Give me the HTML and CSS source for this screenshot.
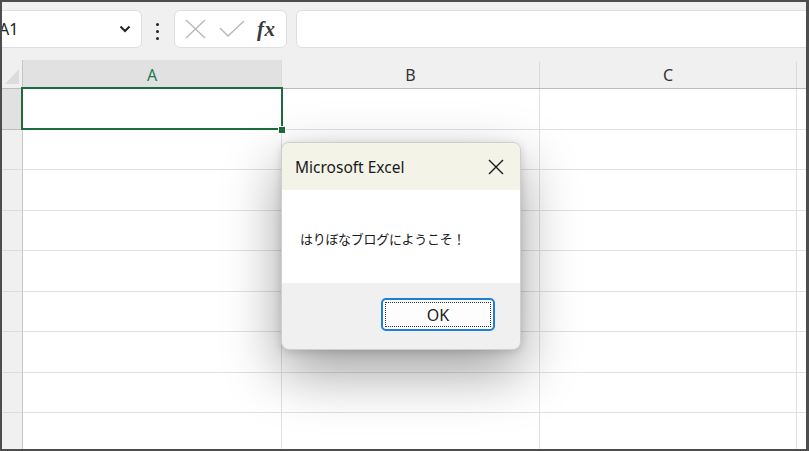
FILE: index.html
```html
<!DOCTYPE html>
<html lang="ja">
<head>
<meta charset="UTF-8" />
<title>Microsoft Excel</title>
<link rel="stylesheet" href="styles.css">
</head>
<body>
<div class="frame">

  <!-- Name box & formula bar -->
  <div class="toolbar">
    <div class="namebox">
      <span class="ref">A1</span>
      <svg class="chev" width="12" height="8" viewBox="0 0 12 8"><polyline points="1.5,1.5 6,6 10.5,1.5" fill="none" stroke="#222" stroke-width="2"/></svg>
    </div>
    <div class="dots"><i></i><i></i><i></i></div>
    <div class="fbtns">
      <svg width="21" height="20" viewBox="0 0 21 20"><path d="M1 1 L20 19 M20 1 L1 19" stroke="#b8b8b8" stroke-width="1.4" fill="none"/></svg>
      <svg width="26" height="18" viewBox="0 0 26 18"><polyline points="1,8 9,16 25,1" fill="none" stroke="#b8b8b8" stroke-width="1.4"/></svg>
      <span class="fx">fx</span>
    </div>
    <div class="finput"></div>
  </div>

  <!-- Sheet -->
  <div class="sheet">
    <div class="hrow">
      <div class="corner"><span class="tri"></span></div>
      <div class="colh sel">A</div>
      <div class="colh">B</div>
      <div class="colh">C</div>
      <div class="colh rest"></div>
    </div>
    <div class="row first">
      <div class="rowh sel"></div>
      <div class="cell active"><span class="selbox"></span><span class="handle"></span></div>
      <div class="cell"></div><div class="cell"></div><div class="cell rest"></div>
    </div>
    <div class="row"><div class="rowh"></div><div class="cell"></div><div class="cell"></div><div class="cell"></div><div class="cell rest"></div></div>
    <div class="row"><div class="rowh"></div><div class="cell"></div><div class="cell"></div><div class="cell"></div><div class="cell rest"></div></div>
    <div class="row"><div class="rowh"></div><div class="cell"></div><div class="cell"></div><div class="cell"></div><div class="cell rest"></div></div>
    <div class="row"><div class="rowh"></div><div class="cell"></div><div class="cell"></div><div class="cell"></div><div class="cell rest"></div></div>
    <div class="row"><div class="rowh"></div><div class="cell"></div><div class="cell"></div><div class="cell"></div><div class="cell rest"></div></div>
    <div class="row"><div class="rowh"></div><div class="cell"></div><div class="cell"></div><div class="cell"></div><div class="cell rest"></div></div>
    <div class="row"><div class="rowh"></div><div class="cell"></div><div class="cell"></div><div class="cell"></div><div class="cell rest"></div></div>
    <div class="row"><div class="rowh"></div><div class="cell"></div><div class="cell"></div><div class="cell"></div><div class="cell rest"></div></div>
  </div>

  <!-- Message box -->
  <div class="dialog">
    <div class="dtitle">
      <span>Microsoft Excel</span>
      <svg width="16" height="16" viewBox="0 0 16 16"><path d="M1 1 L15 15 M15 1 L1 15" stroke="#1a1a1a" stroke-width="1.4" fill="none"/></svg>
    </div>
    <div class="dbody">はりぼなブログにようこそ！</div>
    <div class="dfoot">
      <button class="ok"><span>OK</span></button>
    </div>
  </div>

</div>
</body>
</html>
```

FILE: styles.css
```css
/* Base */
body, html {
  margin: 0; padding: 0;
  width: 809px; height: 451px;
  overflow: hidden;
  background: #fff;
  font-family: "Noto Sans", "Noto Sans CJK JP", sans-serif;
}
.frame {
  position: relative;
  box-sizing: border-box;
  width: 809px; height: 451px;
  border: 2px solid #4d4d4d;
  border-right-width: 3px;
  overflow: hidden;
  background: #fff;
}

/* Toolbar */
.toolbar {
  display: flex;
  align-items: flex-start;
  height: 58px;
  padding-top: 8px;
  box-sizing: border-box;
  background: #f0f0f0;
}
.namebox {
  display: flex;
  align-items: center;
  justify-content: space-between;
  box-sizing: border-box;
  width: 150px; height: 38px;
  margin-left: -10px;
  padding: 0 10px 0 6px;
  background: #fff;
  border: 1px solid #dedede;
  border-radius: 6px;
  font-size: 16px;
  color: #222;
}
.dots {
  display: flex;
  flex-direction: column;
  gap: 4px;
  margin: 13px 0 0 14px;
}
.dots i {
  width: 3px; height: 3px;
  background: #222;
  border-radius: 50%;
}
.fbtns {
  display: flex;
  align-items: center;
  gap: 13px;
  box-sizing: border-box;
  width: 113px; height: 38px;
  margin-left: 15px;
  padding-left: 10px;
  background: #fff;
  border: 1px solid #dedede;
  border-radius: 6px;
}
.fx {
  font-family: "Liberation Serif", "DejaVu Serif", serif;
  font-style: italic;
  font-weight: bold;
  font-size: 21px;
  color: #3a3a3a;
  margin-left: -1px;
  letter-spacing: 0.5px;
}
.finput {
  flex: 1;
  height: 38px;
  box-sizing: border-box;
  margin-left: 9px;
  margin-right: -10px;
  background: #fff;
  border: 1px solid #dedede;
  border-radius: 6px;
}

/* Sheet grid */
.hrow, .row {
  display: grid;
  grid-template-columns: 21px 259px 258px 257px 1fr;
}
.hrow {
  height: 29px;
  background: #f0f0f0;
  border-bottom: 1px solid #bcbcbc;
  box-sizing: border-box;
}
.corner {
  position: relative;
  border-right: 1px solid #c6c6c6;
  box-sizing: border-box;
}
.tri {
  position: absolute;
  right: 3px; bottom: 4px;
  width: 0; height: 0;
  border-left: 14px solid transparent;
  border-bottom: 15px solid #dcdcdc;
}
.colh {
  display: flex;
  align-items: center;
  justify-content: center;
  margin-top: 2px;
  border-right: 1px solid #dadada;
  font-size: 16px;
  color: #333;
}
.colh.sel {
  background: #e1e1e1;
  color: #1f7a4d;
  margin-top: 0;
  padding-top: 2px;
}
.colh.rest { border-right: none; }

.row {
  height: 41px;
  box-sizing: border-box;
}
.row:nth-child(odd) { height: 40px; }
.rowh {
  background: #f0f0f0;
  border-right: 1px solid #c6c6c6;
  border-bottom: 1px solid #dcdcdc;
}
.rowh.sel { background: #e1e1e1; border-bottom-color: #bcbcbc; }
.cell {
  position: relative;
  border-right: 1px solid #e1e1e1;
  border-bottom: 1px solid #e1e1e1;
}
.cell.rest { border-right: none; }

/* Selected cell */
.cell.active { z-index: 2; }
.selbox {
  position: absolute;
  top: -2px; left: -2px; right: -2px; bottom: -1px;
  border: 2px solid #1d6b3f;
}
.handle {
  position: absolute;
  right: -5px; bottom: -5px;
  width: 6px; height: 6px;
  background: #1d6b3f;
  border: 1px solid #fff;
}

/* Dialog */
.dialog {
  position: absolute;
  z-index: 5;
  left: 279px; top: 140px;
  width: 238px; height: 206px;
  display: flex;
  flex-direction: column;
  border: 1px solid #cfcfcf;
  border-radius: 8px;
  overflow: hidden;
  background: #f0f0f0;
  box-shadow: 0 22px 56px rgba(0, 0, 0, 0.38), 0 2px 8px rgba(0, 0, 0, 0.14);
}
.dtitle {
  display: flex;
  align-items: center;
  justify-content: space-between;
  height: 47px;
  padding: 0 16px 0 13px;
  background: #f3f3e7;
  font-size: 15.5px;
  color: #1a1a1a;
}
.dbody {
  height: 93px;
  display: flex;
  align-items: center;
  padding-left: 18px;
  padding-top: 3px;
  box-sizing: border-box;
  background: #fff;
  font-family: "Noto Sans CJK JP", sans-serif;
  font-size: 13px;
  letter-spacing: -0.3px;
  color: #1a1a1a;
}
.dfoot {
  flex: 1;
  display: flex;
  justify-content: flex-end;
  align-items: flex-start;
  padding: 15px 25px 0 0;
}
.ok {
  width: 114px; height: 33px;
  padding: 2px;
  background: #fdfdfd;
  border: 2px solid #1f7fd6;
  border-radius: 5px;
  font-family: "Noto Sans", sans-serif;
  font-size: 16px;
  color: #222;
}
.ok span {
  display: flex;
  align-items: center;
  justify-content: center;
  height: 100%;
  box-sizing: border-box;
  border: 1px dotted #333;
}
```
